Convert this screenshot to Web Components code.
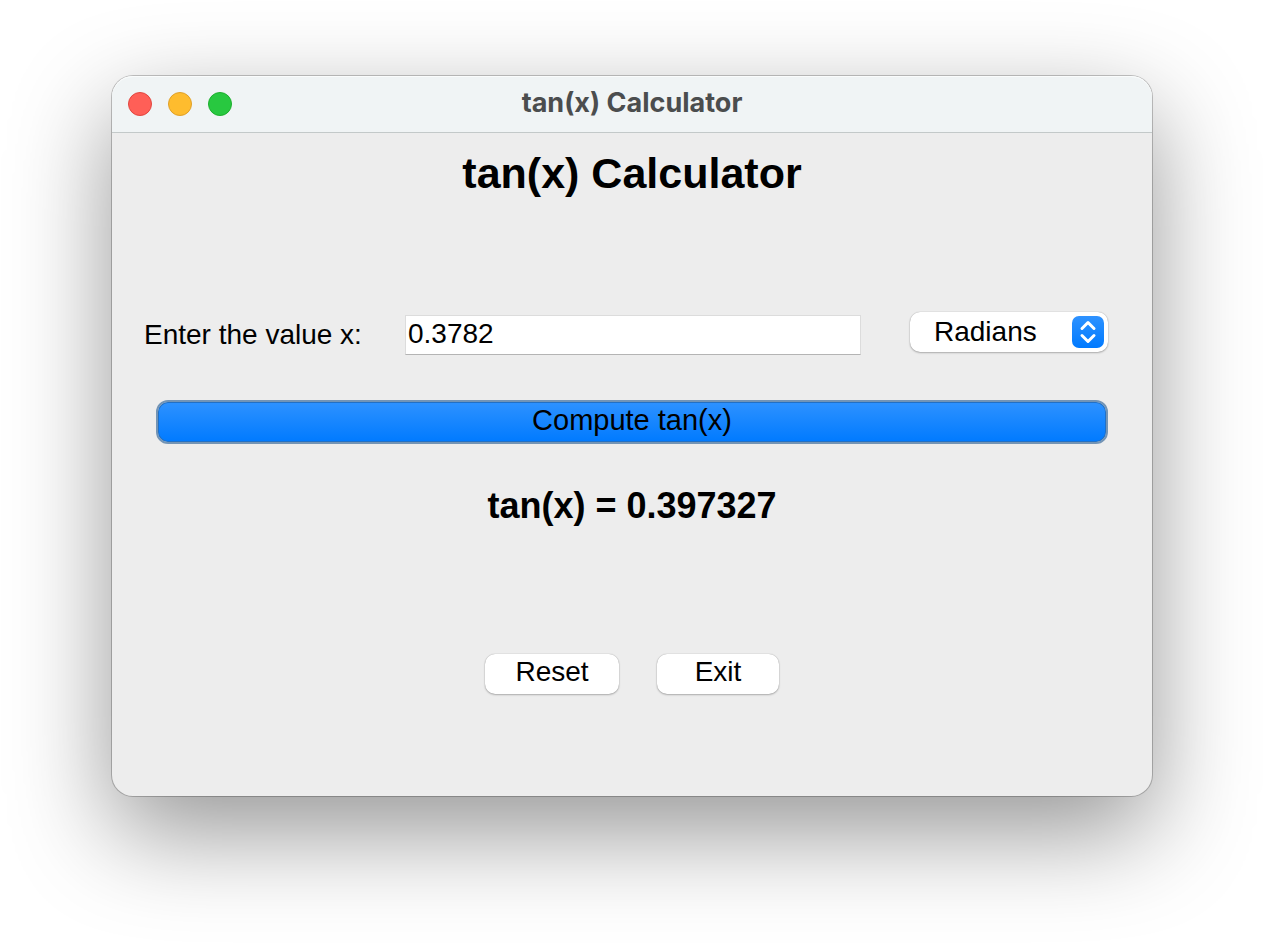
<!DOCTYPE html>
<html lang="en">
<head>
<meta charset="utf-8">
<title>tan(x) Calculator</title>
<style>
  body { margin: 0; background: #fff; color: #000; font: 28px/40px "Liberation Sans", Arial, sans-serif; }
</style>
</head>
<body>
<tan-calculator></tan-calculator>
<script>
class ShadowElement extends HTMLElement {
  constructor() {
    super();
    this.attachShadow({ mode: "open" }).innerHTML = this.constructor.markup;
  }
}

class MacWindow extends ShadowElement {
  static markup = `
    <style>
      :host { display: block; padding: 76px 112px 148px; }
      section { border-radius: 21px; background: #ededed;
        box-shadow: 0 0 0 1px rgba(0,0,0,.22), 0 36px 100px rgba(0,0,0,.42); }
      header { display: grid; grid-template-columns: 1fr auto 1fr; align-items: center; height: 56px;
        padding: 0 16px; background: #f0f4f5; border-bottom: 1px solid #c3c9c9;
        border-radius: 21px 21px 0 0; box-shadow: inset 0 1px #fafcfc; }
      nav { display: flex; gap: 16px; }
      nav button { width: 24px; height: 24px; padding: 0; border: 1px solid; border-radius: 50%; }
      .close { background: #ff5f57; border-color: #e2463f; }
      .minimize { background: #febc2e; border-color: #e0a028; }
      .zoom { background: #28c840; border-color: #1daf2d; }
      .title { color: #4b4d4e; font: 700 27px/32px Inter, sans-serif; padding-bottom: 2px; }
    </style>
    <section>
      <header>
        <nav aria-label="Window controls">
          <button class="close" aria-label="Close"></button>
          <button class="minimize" aria-label="Minimize"></button>
          <button class="zoom" aria-label="Zoom"></button>
        </nav>
        <div class="title"><slot name="title"></slot></div>
      </header>
      <slot></slot>
    </section>`;
}

class PushButton extends ShadowElement {
  static markup = `
    <style>
      :host { display: block; }
      button { display: block; width: 100%; height: 40px; padding: 0 0 4px; border: 0; border-radius: 10px;
        background: #fff; color: #000; font: inherit; line-height: 36px;
        box-shadow: 0 0 1px rgba(0,0,0,.35), 0 1px 2px rgba(0,0,0,.25); }
      :host([primary]) button { height: 44px; border: 2px solid #7394b5; border-radius: 12px;
        font-size: 29px; background: linear-gradient(#2e92ff, #007aff) padding-box;
        box-shadow: inset 0 0 0 1px #2270c4; }
    </style>
    <button type="button"><slot></slot></button>`;
}

class PopupSelect extends ShadowElement {
  static markup = `
    <style>
      :host { display: grid; height: 40px; }
      select, svg { grid-area: 1 / 1; }
      select { appearance: none; width: 100%; height: 40px; margin: 0; padding: 0 44px 0 24px; border: 0;
        border-radius: 10px; background: #fff; color: #000; font: inherit; line-height: 40px;
        box-shadow: 0 0 1px rgba(0,0,0,.35), 0 1px 2px rgba(0,0,0,.25); }
      svg { justify-self: end; align-self: center; margin-right: 4px; width: 32px; height: 32px; pointer-events: none; }
    </style>
    <select aria-label="Angle unit"><option>Radians</option><option>Degrees</option></select>
    <svg viewBox="0 0 32 32" aria-hidden="true">
      <defs><linearGradient id="blue" x2="0" y2="1"><stop stop-color="#2e92ff"/><stop offset="1" stop-color="#007aff"/></linearGradient></defs>
      <rect width="32" height="32" rx="7" fill="url(#blue)"/>
      <path d="M10 12.5 16 6.5l6 6M10 19.5l6 6 6-6" fill="none" stroke="#fff" stroke-width="3" stroke-linecap="round" stroke-linejoin="round"/>
    </svg>`;
}

class TanCalculator extends ShadowElement {
  static markup = `
    <style>
      :host { display: block; }
      main { padding: 14px 44px 102px; }
      h1 { margin: 0 0 113px; text-align: center; font-size: 43px; line-height: 52px; }
      .entry { display: grid; grid-template-columns: 224px 1fr 198px; align-items: start; margin-left: -12px; }
      label { padding-top: 3px; white-space: nowrap; }
      input { box-sizing: border-box; width: auto; min-width: 0; height: 40px; margin: 3px 49px 0 37px; padding: 0 2px 2px;
        border: 1px solid #dcdcdc; border-bottom-color: #b4b4b4; border-radius: 0; background: #fff; color: #000; font: inherit; outline: 0; }
      .compute { margin-top: 45px; }
      output { display: block; margin: 40px 0 126px; text-align: center; font-size: 36px; line-height: 44px; font-weight: 700; }
      .actions { display: flex; justify-content: center; gap: 38px; }
      .reset { width: 134px; }
      .exit { width: 122px; }
    </style>
    <mac-window>
      <span slot="title">tan(x) Calculator</span>
      <main>
        <h1>tan(x) Calculator</h1>
        <div class="entry">
          <label for="value">Enter the value x:</label>
          <input id="value" type="text" value="0.3782">
          <popup-select></popup-select>
        </div>
        <push-button class="compute" primary>Compute tan(x)</push-button>
        <output for="value">tan(x) = 0.397327</output>
        <div class="actions">
          <push-button class="reset">Reset</push-button>
          <push-button class="exit">Exit</push-button>
        </div>
      </main>
    </mac-window>`;
}

customElements.define("mac-window", MacWindow);
customElements.define("push-button", PushButton);
customElements.define("popup-select", PopupSelect);
customElements.define("tan-calculator", TanCalculator);
</script>
</body>
</html>
